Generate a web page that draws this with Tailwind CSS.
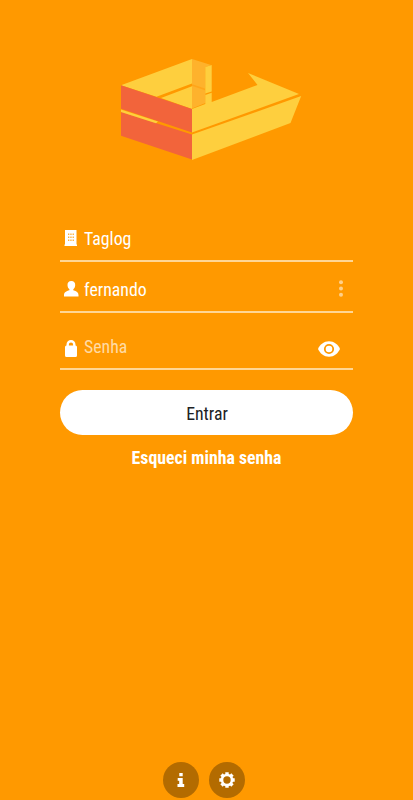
<!DOCTYPE html>
<html lang="pt-BR">
<head>
  <meta charset="UTF-8" />
  <meta name="viewport" content="width=device-width, initial-scale=1.0" />
  <title>Taglog</title>
  <script src="https://cdn.jsdelivr.net/npm/@tailwindcss/browser@4"></script>
</head>
<body class="bg-[#ff9900] text-white h-screen overflow-hidden flex flex-col font-['Roboto_Condensed','Roboto',sans-serif] font-stretch-condensed text-[17.8px] leading-6">
  <!-- Logo -->
  <header class="pt-[58px] flex justify-center">
    <svg class="w-[182px] h-[103px] ml-[9px]" viewBox="120 58 182 103" role="img" aria-label="Taglog">
      <path fill="#fecf3e" d="M121 85.3 192 59V83.500L156.500 96.800ZM161 98 192 86.300V109Z" />
      <path fill="#feb22c" d="M192 59 211 65 205.500 67V103L192 108.500Z" />
      <path stroke="#ffa51a" stroke-width="1.500" d="M192 85 205.300 89.500" />
      <path fill="#fecf3e" d="M205.300 67 211.700 65V91.500L205.300 93.500ZM205.300 95 211.700 92.800V102L257.500 85 248 73 299 94 192 132.500V109L205.300 104ZM192 134.500 301.200 96 290.500 123 192 160Z" />
      <path fill="#f2643b" d="M121 85.300 192 109V132.500L121 108.700ZM121 112 192 134.500V159.500L121 135.800Z" />
      <path fill="#fecf3e" d="M121 109.500 158 121.500 156 123.200 121 112Z" />
    </svg>
  </header>

  <!-- Login form -->
  <main class="flex-1 px-[60px] pt-[57px]">
    <form class="flex flex-col">
      <div class="h-[44px] flex items-center border-b-2 border-[#ffd695] px-1">
        <svg class="w-[14px] h-4 mb-0.5" viewBox="0 0 14 16" fill="none">
          <path fill="#fff" d="M1 0h11.500v14.500H13V16H.5v-1.500H1Z" />
          <path fill="#ffad33" d="M4 3.500h1.300v1.500H4zM6.300 3.500h1.300v1.500H6.300zM8.600 3.500h1.300v1.500H8.600zM4 6.500h1.300V8H4zM6.300 6.500h1.300V8H6.300zM8.600 6.500h1.300V8H8.600zM4 9.500h1.300V11H4zM6.300 9.500h1.300V11H6.300zM8.600 9.500h1.300V11H8.600z" />
        </svg>
        <span class="ml-1.5">Taglog</span>
      </div>
      <div class="h-[51px] pt-[7px] flex items-center border-b-2 border-[#ffd695] px-1">
        <svg class="w-[15px] h-4 mb-0.5" viewBox="0 0 15 16" fill="#fff">
          <path d="M7.300 0C10 0 11.400 1.800 11.200 4.200 11.100 6 10.300 7.500 9.300 8.300V9.300C12.500 10.300 14.500 11.200 14.500 14V15.500H0V14C0 11.200 2.200 10.300 5.400 9.300V8.300C4.400 7.500 3.600 6 3.500 4.200 3.300 1.800 4.700 0 7.300 0Z" />
        </svg>
        <span class="ml-[5px]">fernando</span>
        <svg class="w-1 h-[17px] ml-auto mr-1.5 mb-[3px]" viewBox="0 0 4 17" fill="#ffd08a">
          <circle cx="2" cy="2.300" r="2" /><circle cx="2" cy="8.500" r="2" /><circle cx="2" cy="14.700" r="2" />
        </svg>
      </div>
      <div class="h-[57px] pt-[13px] flex items-center border-b-2 border-[#ffd695] px-1">
        <svg class="w-[14px] h-[17px] mt-[3px]" viewBox="0 0 14 17" fill="none">
          <path fill="#fff" d="M2.500 5.500h9A1.500 1.500 0 0 1 13 7v8.500a1.500 1.500 0 0 1-1.500 1.500h-9A1.500 1.500 0 0 1 1 15.500V7A1.500 1.500 0 0 1 2.500 5.500Z" />
          <path stroke="#fff" stroke-width="2.400" d="M3.700 7.500V4.500a3.300 3.300 0 0 1 6.600 0V7.500" />
        </svg>
        <span class="ml-1.5 text-[#ffdba5]">Senha</span>
        <svg class="w-[22px] h-4 ml-auto mr-[9px] mt-1" viewBox="0 0 22 16" fill="none">
          <path fill="#fff" d="M11 .3C16 .3 20 3.500 22 8 20 12.500 16 15.700 11 15.700S2 12.500 0 8C2 3.500 6 .3 11 .3Z" />
          <circle cx="11" cy="8" r="4.200" stroke="#ff9900" stroke-width="1.800" />
        </svg>
      </div>
      <button type="button" class="mt-5 h-[45px] pt-0.5 pl-px rounded-full bg-white text-[#202124]">Entrar</button>
    </form>
    <a href="#" class="mt-[11px] block text-center font-bold">Esqueci minha senha</a>
  </main>

  <!-- Bottom actions -->
  <footer class="flex justify-center gap-2.5 pb-0.5 pr-[6px]">
    <button type="button" aria-label="Informações" class="size-9 rounded-full bg-[#b36b00] flex items-center justify-center">
      <svg class="w-2 h-[14px]" viewBox="0 0 8 14" fill="#fff">
        <path d="M2.300 0h3.400v3.300H2.300zM.7 5h5v6H7.200V14H.5v-3H2.200V7.700H.7z" />
      </svg>
    </button>
    <button type="button" aria-label="Configurações" class="size-9 rounded-full bg-[#b36b00] flex items-center justify-center">
      <svg class="size-4" viewBox="0 0 16 16" fill="none" stroke="#fff">
        <circle cx="8" cy="8" r="5" stroke-width="2.600" />
        <path stroke-width="3.400" d="M8 .3v3M8 12.700v3M.3 8h3M12.700 8h3M2.500 2.500 4.400 4.400M11.600 11.600l1.900 1.900M2.500 13.500l1.900-1.900M11.600 4.400l1.900-1.900" />
      </svg>
    </button>
  </footer>
</body>
</html>
